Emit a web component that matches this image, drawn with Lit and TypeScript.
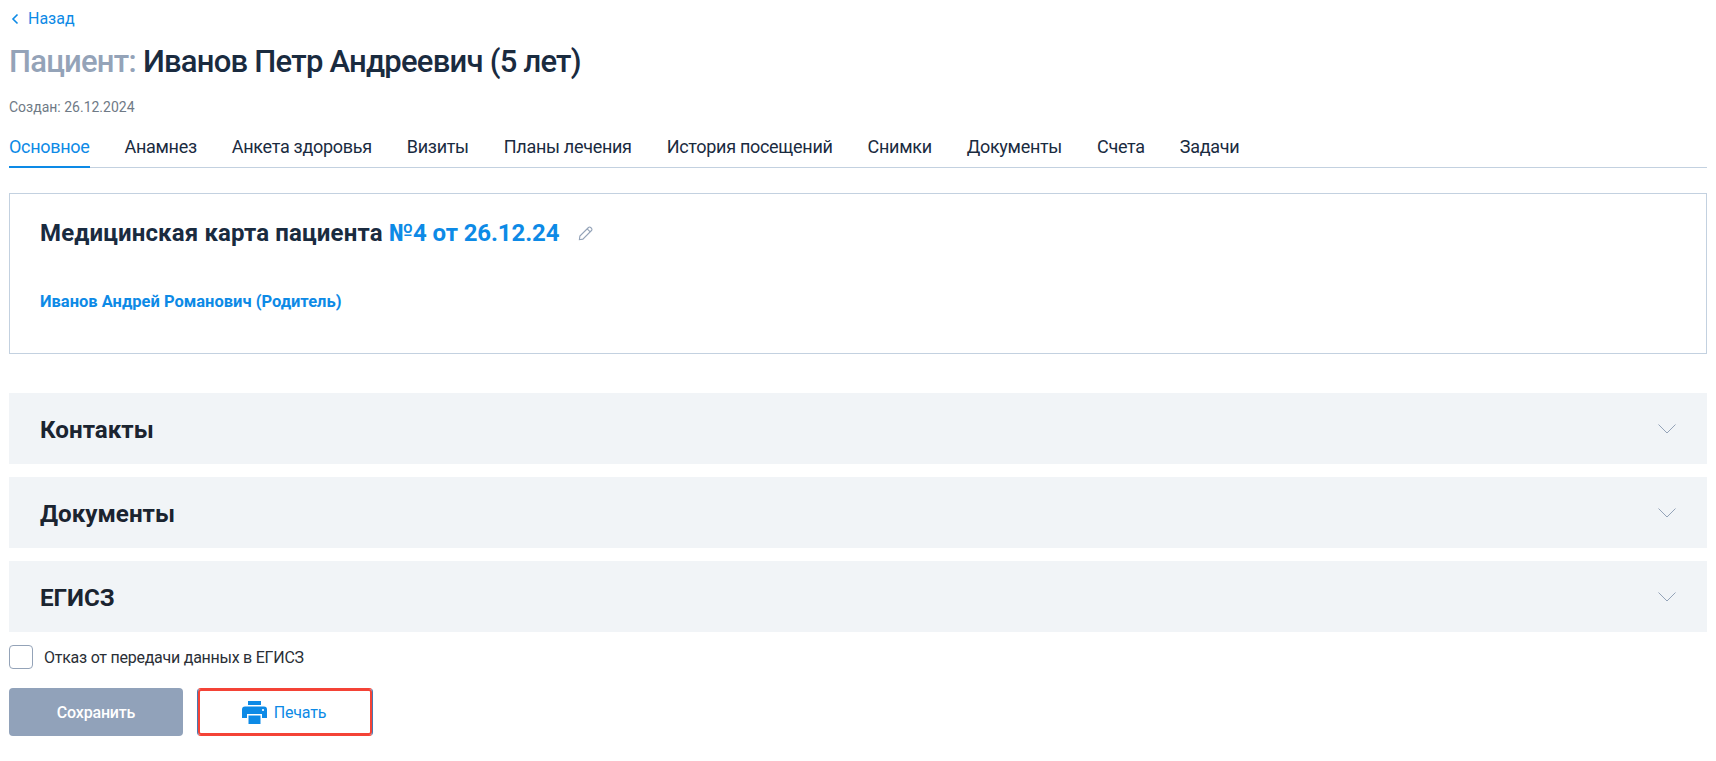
import { LitElement, html, css } from "lit";
import { customElement } from "lit/decorators.js";

const TABS = ["Основное","Анамнез","Анкета здоровья","Визиты","Планы лечения","История посещений","Снимки","Документы","Счета","Задачи"];
const SECTIONS = ["Контакты","Документы","ЕГИСЗ"];

@customElement("app-root")
export class AppRoot extends LitElement {
  static styles = css`
    :host { display: block; font-family: Roboto, "Liberation Sans", sans-serif; color: #1a2b3f; background: #fff; min-height: 761px; box-sizing: border-box; padding: 0 9px; }
    * { box-sizing: border-box; }
    .back { display: flex; align-items: center; gap: 9px; height: 37px; color: #0d8ae6; font-size: 16px; padding-left: 2px; }
    .title { margin: 0; height: 50px; display: flex; align-items: center; gap: 7px; font-size: 31px; font-weight: 500; line-height: 50px; white-space: nowrap; letter-spacing: -0.76px; }
    .title span { color: #94a3b8; }
    .created { height: 40px; padding-top: 10px; font-size: 14px; line-height: 20px; color: #6f7a86; }
    .tabs { display: flex; gap: 35px; height: 41px; border-bottom: 1px solid #c3d1e0; }
    .tab { height: 41px; padding-top: 8px; font-size: 18px; line-height: 24px; white-space: nowrap; letter-spacing: -0.3px; }
    .tab.on { color: #0d8ae6; border-bottom: 2px solid #0d8ae6; }
    .card { margin-top: 25px; height: 161px; border: 1px solid #c3d1e0; padding: 24px 30px 0; }
    .card-title { margin: 0; display: flex; align-items: center; gap: 19px; font-size: 24px; line-height: 30px; font-weight: 700; white-space: nowrap; letter-spacing: 0.15px; }
    .card-title b { color: #0d8ae6; font-weight: 700; letter-spacing: -0.1px; }
    .link { margin-top: 44px; color: #0d8ae6; font-size: 16.5px; line-height: 20px; font-weight: 700; }
    .sections { margin-top: 39px; display: flex; flex-direction: column; gap: 13px; }
    .section { height: 71px; background: #f1f4f7; display: flex; align-items: center; justify-content: space-between; padding: 0 31px 0 31px; font-size: 24.2px; font-weight: 700; color: #1b2430; }
    .section span { margin-top: 2px; }
    .check { margin-top: 13px; height: 24px; display: flex; align-items: center; gap: 11px; font-size: 16px; color: #2a2f36; letter-spacing: -0.25px; }
    .box { width: 24px; height: 24px; border: 1px solid #94a3b8; border-radius: 4px; background: #fff; }
    .actions { margin-top: 19px; display: flex; gap: 14px; }
    .btn { height: 48px; width: 174px; border-radius: 4px; display: flex; align-items: center; justify-content: center; font-size: 16px; font-family: inherit; border: none; letter-spacing: -0.2px; }
    .save { background: #91a2ba; color: #fff; font-weight: 500; }
    .print { width: 176px; background: #fff; color: #0d8ae6; gap: 7px; border: 1px solid; border-color: #f44336 #4a78b0; box-shadow: inset 0 0 0 2px #f44336; }
    .print svg { margin-left: -2px; }
  `;

  render() {
    return html`
      <div class="back">
        <svg width="8" height="12" viewBox="0 0 8 12" fill="none"><path d="M6.500 1.500 2 6l4.500 4.500" stroke="#0d8ae6" stroke-width="1.600"/></svg>
        <span>Назад</span>
      </div>
      <h1 class="title"><span>Пациент:</span> Иванов Петр Андреевич (5 лет)</h1>
      <div class="created">Создан: 26.12.2024</div>
      <nav class="tabs">
        ${TABS.map((t, i) => html`<div class="tab ${i === 0 ? "on" : ""}">${t}</div>`)}
      </nav>
      <div class="card">
        <h2 class="card-title">
          <div>Медицинская карта пациента <b>№4 от 26.12.24</b></div>
          <svg width="15" height="15" viewBox="0 0 16 16" fill="none" stroke="#94a3b8" stroke-width="1.200"><path d="M11.200 1.600a1.600 1.600 0 0 1 2.300 0l.9.9a1.600 1.600 0 0 1 0 2.300L5.200 14 1.500 14.600 2 10.800z"/><path d="M9.800 3 13 6.200"/></svg>
        </h2>
        <div class="link">Иванов Андрей Романович (Родитель)</div>
      </div>
      <div class="sections">
        ${SECTIONS.map(s => html`<div class="section"><span>${s}</span>
          <svg width="18" height="10" viewBox="0 0 18 10" fill="none"><path d="M.5.5 9 9l8.500-8.500" stroke="#94a3b8"/></svg></div>`)}
      </div>
      <label class="check"><span class="box"></span>Отказ от передачи данных в ЕГИСЗ</label>
      <div class="actions">
        <button class="btn save">Сохранить</button>
        <button class="btn print">
          <svg width="25" height="23" viewBox="0 0 25 23" fill="#0d8ae6"><path d="M6 0h13v4H6z"/><path d="M3 5.500h19a3 3 0 0 1 3 3V17h-5v-4H5v4H0V8.500a3 3 0 0 1 3-3z"/><path d="M6.500 14.500h12V23h-12z"/><circle cx="21" cy="9" r="1.100" fill="#fff"/></svg>
          <span>Печать</span>
        </button>
      </div>
    `;
  }
}
